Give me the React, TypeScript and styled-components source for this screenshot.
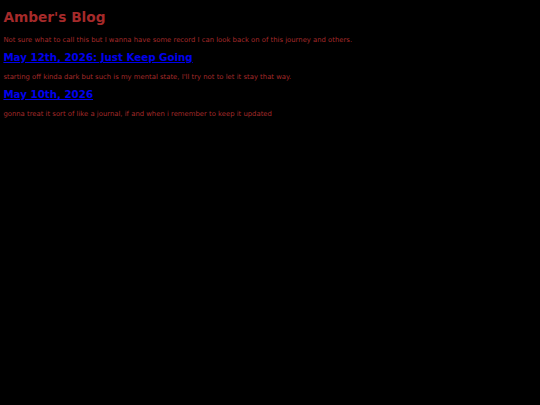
import { createGlobalStyle } from 'styled-components';
import styled from 'styled-components';

const GlobalStyle = createGlobalStyle`
  html, body {
    background: #000;
  }
  body {
    margin: 0 3.4px 3.4px;
    font-family: "DejaVu Sans", sans-serif;
    font-size: 6.85px;
    color: #a52a2a;
  }
`;

const Title = styled.h1`
  font-size: 2em;
  font-weight: bold;
  margin: 0.67em 0 11px;
  color: #a52a2a;
`;

const Text = styled.p`
  margin: 10px 0 7px;
`;

const PostTitle = styled.h2`
  font-size: 1.5em;
  font-weight: bold;
  margin: 7px 0;

  a {
    color: #0000ee;
    text-decoration: underline;
  }
`;

const posts = [
  {
    title: 'May 12th, 2026: Just Keep Going',
    summary:
      "starting off kinda dark but such is my mental state, I'll try not to let it stay that way.",
  },
  {
    title: 'May 10th, 2026',
    summary: 'gonna treat it sort of like a journal, if and when i remember to keep it updated',
  },
];

export default function App() {
  return (
    <>
      <GlobalStyle />
      <Title>Amber's Blog</Title>
      <Text>
        Not sure what to call this but I wanna have some record I can look back on of this
        journey and others.
      </Text>
      {posts.map((post) => (
        <div key={post.title}>
          <PostTitle>
            <a href="#">{post.title}</a>
          </PostTitle>
          <Text>{post.summary}</Text>
        </div>
      ))}
    </>
  );
}
